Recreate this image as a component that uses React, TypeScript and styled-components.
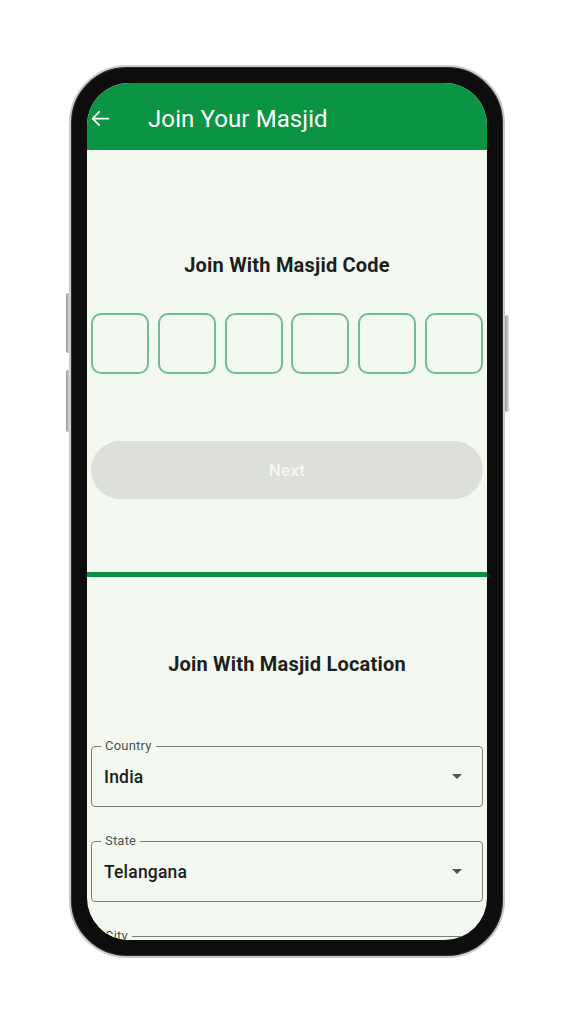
import styled, { createGlobalStyle } from "styled-components";

const GlobalStyle = createGlobalStyle`
    html, body {
        margin: 0;
        padding: 0;
        background: #ffffff;
        font-family: Roboto, "Noto Sans", Arial, sans-serif;
    }
`;

const Page = styled.div`
    width: 576px;
    height: 1024px;
    padding: 65px 0 0 69px;
    box-sizing: border-box;
    overflow: hidden;
`;

const Phone = styled.div`
    position: relative;
    width: 436px;
    height: 893px;
    box-sizing: border-box;
    padding: 16px;
    border: 2px solid #c9c9c9;
    border-radius: 58px;
    background: #0d0d0d;
    box-shadow: inset 0 0 0 1px #2a2a2a;
`;

const SideButton = styled.div<{ $side: "left" | "right"; $top: number; $h: number }>`
    position: absolute;
    ${(p) => (p.$side === "left" ? "left: -5px;" : "right: -6px;")}
    top: ${(p) => p.$top}px;
    width: 4px;
    height: ${(p) => p.$h}px;
    background: linear-gradient(90deg, #9a9a9a, #dedede);
    border-radius: 2px;
`;

const Screen = styled.div`
    width: 400px;
    height: 857px;
    border-radius: 42px;
    overflow: hidden;
    background: #f3f9f0;
    display: flex;
    flex-direction: column;
`;

const AppBar = styled.div`
    height: 67px;
    flex-shrink: 0;
    background: #0b9444;
    display: flex;
    align-items: center;
    padding: 4px 0 0 1px;
    box-sizing: border-box;
    color: #ffffff;
`;

const BackBtn = styled.div`
    width: 24px;
    height: 24px;
    display: flex;
    align-items: center;
    justify-content: center;
    margin-right: 36px;
`;

const AppTitle = styled.h1`
    margin: 0;
    font-size: 24px;
    font-weight: 400;
    letter-spacing: 0.1px;
`;

const Section = styled.div<{ $pt: number }>`
    padding: ${(p) => p.$pt}px 4px 0;
    display: flex;
    flex-direction: column;
`;

const SectionTitle = styled.h2`
    margin: 0;
    height: 24px;
    line-height: 24px;
    text-align: center;
    font-size: 20px;
    font-weight: 700;
    letter-spacing: 0.2px;
    color: #1d1f1c;
`;

const CodeRow = styled.div`
    margin-top: 36px;
    display: flex;
    justify-content: space-between;
`;

const CodeBox = styled.div`
    width: 58px;
    height: 61px;
    box-sizing: border-box;
    border: 2px solid #72bb92;
    border-radius: 10px;
`;

const NextButton = styled.button`
    margin-top: 67px;
    height: 58px;
    border: none;
    border-radius: 29px;
    background: #dcdfda;
    color: #f5f7f2;
    font-family: Roboto, sans-serif;
    font-size: 17px;
    font-weight: 500;
    letter-spacing: 0.3px;
`;

const Divider = styled.div`
    margin-top: 73px;
    height: 5px;
    background: #0b8f43;
    flex-shrink: 0;
`;

const Field = styled.div<{ $mt: number }>`
    position: relative;
    margin-top: ${(p) => p.$mt}px;
    height: 61px;
    box-sizing: border-box;
    border: 1px solid #7b7f78;
    border-radius: 4px;
    display: flex;
    align-items: center;
    justify-content: space-between;
    padding: 0 20px 0 12px;
    flex-shrink: 0;
`;

const FieldLabel = styled.span`
    position: absolute;
    top: -9px;
    left: 9px;
    padding: 0 4px;
    background: #f3f9f0;
    font-size: 13px;
    line-height: 16px;
    color: #4f534d;
    letter-spacing: 0.2px;
`;

const FieldValue = styled.span`
    font-size: 17.5px;
    font-weight: 500;
    color: #1b1d1a;
    letter-spacing: 0.2px;
`;

const Caret = styled.span`
    width: 0;
    height: 0;
    border-left: 5.5px solid transparent;
    border-right: 5.5px solid transparent;
    border-top: 5.5px solid #4f534d;
`;

const ArrowBack = () => (
    <svg width="21" height="21" viewBox="0 0 24 24" fill="none" stroke="#ffffff" strokeWidth="2" strokeLinecap="round" strokeLinejoin="round">
        <path d="M21 12H3" />
        <path d="M10.5 4.5L3 12l7.5 7.5" />
    </svg>
);

const fields = [
    { label: "Country", value: "India", mt: 70 },
    { label: "State", value: "Telangana", mt: 34 },
    { label: "City", value: "Hyderabad", mt: 34 },
];

function App() {
    return (
        <>
            <GlobalStyle />
            <Page>
                <Phone>
                    <SideButton $side="left" $top={226} $h={60} />
                    <SideButton $side="left" $top={303} $h={62} />
                    <SideButton $side="right" $top={248} $h={97} />
                    <Screen>
                        <AppBar>
                            <BackBtn><ArrowBack /></BackBtn>
                            <AppTitle>Join Your Masjid</AppTitle>
                        </AppBar>
                        <Section $pt={103}>
                            <SectionTitle>Join With Masjid Code</SectionTitle>
                            <CodeRow>
                                {[0, 1, 2, 3, 4, 5].map((i) => <CodeBox key={i} />)}
                            </CodeRow>
                            <NextButton>Next</NextButton>
                        </Section>
                        <Divider />
                        <Section $pt={75}>
                            <SectionTitle>Join With Masjid Location</SectionTitle>
                            {fields.map((f) => (
                                <Field key={f.label} $mt={f.mt}>
                                    <FieldLabel>{f.label}</FieldLabel>
                                    <FieldValue>{f.value}</FieldValue>
                                    <Caret />
                                </Field>
                            ))}
                        </Section>
                    </Screen>
                </Phone>
            </Page>
        </>
    );
}

export default App;
